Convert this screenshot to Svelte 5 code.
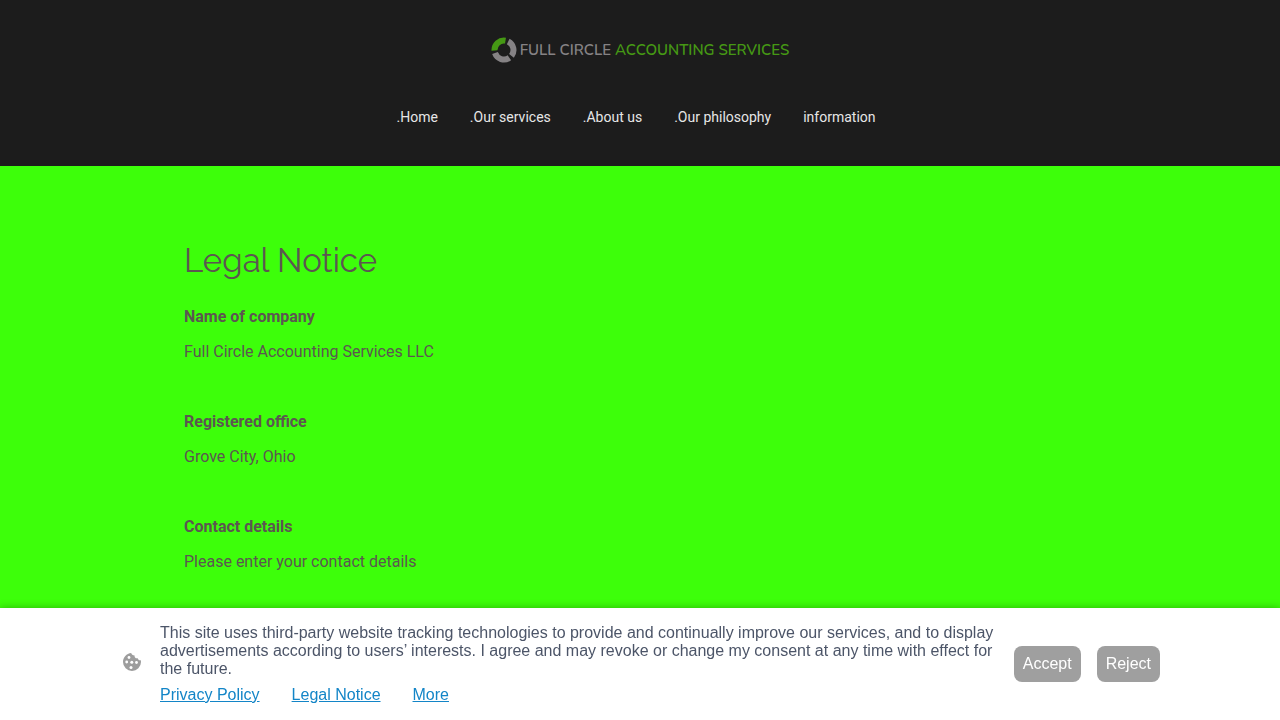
<script>
  const menu = ['.Home', '.Our services', '.About us', '.Our philosophy', 'information'];
  const entries = [
    { title: 'Name of company', text: 'Full Circle Accounting Services LLC' },
    { title: 'Registered office', text: 'Grove City, Ohio' },
    { title: 'Contact details', text: 'Please enter your contact details' }
  ];
  const policies = ['Privacy Policy', 'Legal Notice', 'More'];
  let showConsent = $state(true);
</script>

<header>
  <a class="logo" href="#home">
    <svg viewBox="0 0 26 26" width="26" height="26" aria-hidden="true" fill="none" stroke-width="6">
      <path d="M3.5 13.5A9.5 9.5 0 0 1 14.5 3.6" stroke="#459814" />
      <path d="M17.2 4.5A9.5 9.5 0 0 1 20.5 18.8" stroke="#858284" />
      <path d="M18.4 20.8A9.5 9.5 0 0 1 4 16.1" stroke="#858284" />
    </svg>
    <span>FULL CIRCLE <b>ACCOUNTING SERVICES</b></span>
  </a>
  <nav>
    {#each menu as item}
      <a href="#{item}">{item}</a>
    {/each}
  </nav>
</header>

<main>
  <h1>Legal Notice</h1>
  {#each entries as entry}
    <section>
      <h2>{entry.title}</h2>
      <p>{entry.text}</p>
    </section>
  {/each}
</main>

{#if showConsent}
  <aside class="consent">
    <div class="consent-inner">
      <svg class="cookie" viewBox="0 0 18 18" width="18" height="18" aria-hidden="true">
        <path
          fill="#9d9d9d"
          d="M8.2 0C3.6.4 0 4.300 0 9a9 9 0 0 0 18 0q0-.9-.2-1.800C16.500 7.600 15 6.900 14.700 5.300 12.700 5.700 11.200 4.200 11.600 2.500 9.700 2.500 8.500 1.500 8.200 0Z"
        />
        <g fill="#fff">
          <circle cx="6" cy="4.500" r="1.400" />
          <circle cx="3.700" cy="9" r="1.400" />
          <circle cx="8.800" cy="9.200" r="1.500" />
          <circle cx="13.500" cy="9.500" r="1.400" />
          <circle cx="8" cy="14.500" r="1.500" />
        </g>
      </svg>
      <div class="consent-text">
        <p>
          This site uses third-party website tracking technologies to provide and continually improve
          our services, and to display advertisements according to users’ interests. I agree and may
          revoke or change my consent at any time with effect for the future.
        </p>
        <div class="policies">
          {#each policies as policy}
            <a href="#{policy}">{policy}</a>
          {/each}
        </div>
      </div>
      <div class="actions">
        <button type="button" onclick={() => (showConsent = false)}>Accept</button>
        <button type="button" onclick={() => (showConsent = false)}>Reject</button>
      </div>
    </div>
  </aside>
{/if}

<style>
  :global(body) {
    margin: 0;
    background: #3dff0a;
  }

  header {
    display: flex;
    flex-direction: column;
    align-items: center;
    gap: 43px;
    padding: 36px 24px 39px;
    background: #1c1c1c;
  }

  .logo {
    display: flex;
    align-items: center;
    gap: 3px;
    color: #858284;
    font: 600 15px/28px Nunito, 'Open Sans', sans-serif;
    text-decoration: none;
    white-space: nowrap;
  }

  .logo b {
    color: #459814;
    font-weight: 600;
  }

  nav {
    display: flex;
    flex-wrap: wrap;
    justify-content: center;
    gap: 32px;
    padding-right: 8px;
  }

  nav a {
    color: #e6e6e6;
    font: 14px/20px Roboto, sans-serif;
    text-decoration: none;
  }

  main {
    box-sizing: border-box;
    max-width: 960px;
    margin: 0 auto;
    padding: 73px 24px 120px;
    color: #5c5651;
    font: 16px/35px Roboto, sans-serif;
  }

  h1 {
    margin: 0 0 16px;
    font: 400 33px/44px Raleway, Lato, sans-serif;
  }

  section {
    margin-bottom: 35px;
  }

  h2 {
    margin: 0;
    font-size: 16px;
    font-weight: 700;
  }

  p {
    margin: 0;
  }

  .consent {
    position: fixed;
    right: 0;
    bottom: 0;
    left: 0;
    background: #fff;
    box-shadow: 0 0 8px rgba(0, 0, 0, 0.3);
    color: #4c5568;
    font: 16px/18px 'Liberation Sans', Arial, sans-serif;
  }

  .consent-inner {
    display: flex;
    align-items: center;
    gap: 16px;
    max-width: 1040px;
    margin: 0 auto;
    padding: 16px;
  }

  .cookie {
    flex: none;
    margin: 0 3px 4px;
  }

  .consent-text {
    flex: 1;
  }

  .policies {
    display: flex;
    gap: 32px;
    margin-top: 8px;
  }

  .policies a {
    color: #1385c7;
  }

  .actions {
    display: flex;
    gap: 16px;
  }

  button {
    height: 36px;
    padding: 0 9px;
    border: 0;
    border-radius: 8px;
    background: #9f9f9f;
    color: #fff;
    font: inherit;
    cursor: pointer;
  }
</style>
